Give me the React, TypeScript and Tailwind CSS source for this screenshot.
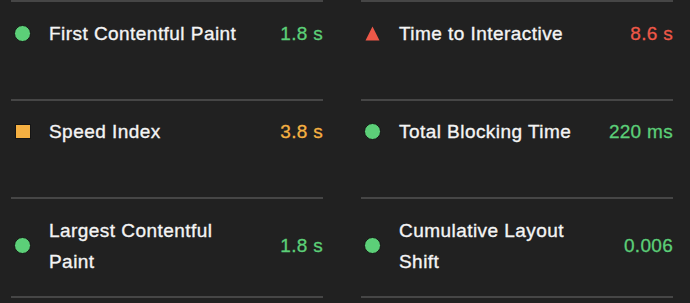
import React from "react";

type Kind = "pass" | "average" | "fail";

const metrics: { label: string; value: string; kind: Kind }[] = [
  { label: "First Contentful Paint", value: "1.8 s", kind: "pass" },
  { label: "Time to Interactive", value: "8.6 s", kind: "fail" },
  { label: "Speed Index", value: "3.8 s", kind: "average" },
  { label: "Total Blocking Time", value: "220 ms", kind: "pass" },
  { label: "Largest Contentful Paint", value: "1.8 s", kind: "pass" },
  { label: "Cumulative Layout Shift", value: "0.006", kind: "pass" },
];

function Icon({ kind }: { kind: Kind }) {
  if (kind === "pass")
    return <span className="block w-[17px] h-[17px] rounded-full bg-[#5ccf78] border border-[#151515]" />;
  if (kind === "average")
    return <span className="block w-[16px] h-[15px] bg-[#f5b042] border border-[#151515]" />;
  return (
    <svg width="15" height="15" viewBox="0 0 15 15">
      <polygon points="7.5,0.5 14.5,14.5 0.5,14.5" fill="#ee5848" />
    </svg>
  );
}

const valueColor: Record<Kind, string> = {
  pass: "text-[#5ccf78]",
  average: "text-[#f5b042]",
  fail: "text-[#ee5848]",
};

export default function App() {
  return (
    <div
      className="w-[690px] h-[303px] bg-[#212121] overflow-hidden pl-[11px]"
      style={{ fontFamily: '"Liberation Sans", Arial, sans-serif' }}
    >
      <div className="grid grid-cols-[312px_312px] gap-x-[38px]">
        {metrics.map((m, i) => (
          <div
            key={i}
            className={
              "border-t-2 border-[#464646] pt-[15.5px] " +
              (i >= 4 ? "h-[100.5px] border-b-2" : "h-[98.5px]")
            }
          >
            <div className="flex items-center">
              <div className="w-[23px] flex justify-center shrink-0">
                <Icon kind={m.kind} />
              </div>
              <div className="ml-[15px] w-[195px] text-[19px] leading-[31px] tracking-[0.45px] text-[#f4f4f4] [-webkit-text-stroke:0.35px_currentColor]">
                {m.label}
              </div>
              <div
                className={
                  "ml-auto text-[19px] leading-[31px] tracking-[0.3px] [-webkit-text-stroke:0.3px_currentColor] " +
                  valueColor[m.kind]
                }
              >
                {m.value}
              </div>
            </div>
          </div>
        ))}
      </div>
    </div>
  );
}
